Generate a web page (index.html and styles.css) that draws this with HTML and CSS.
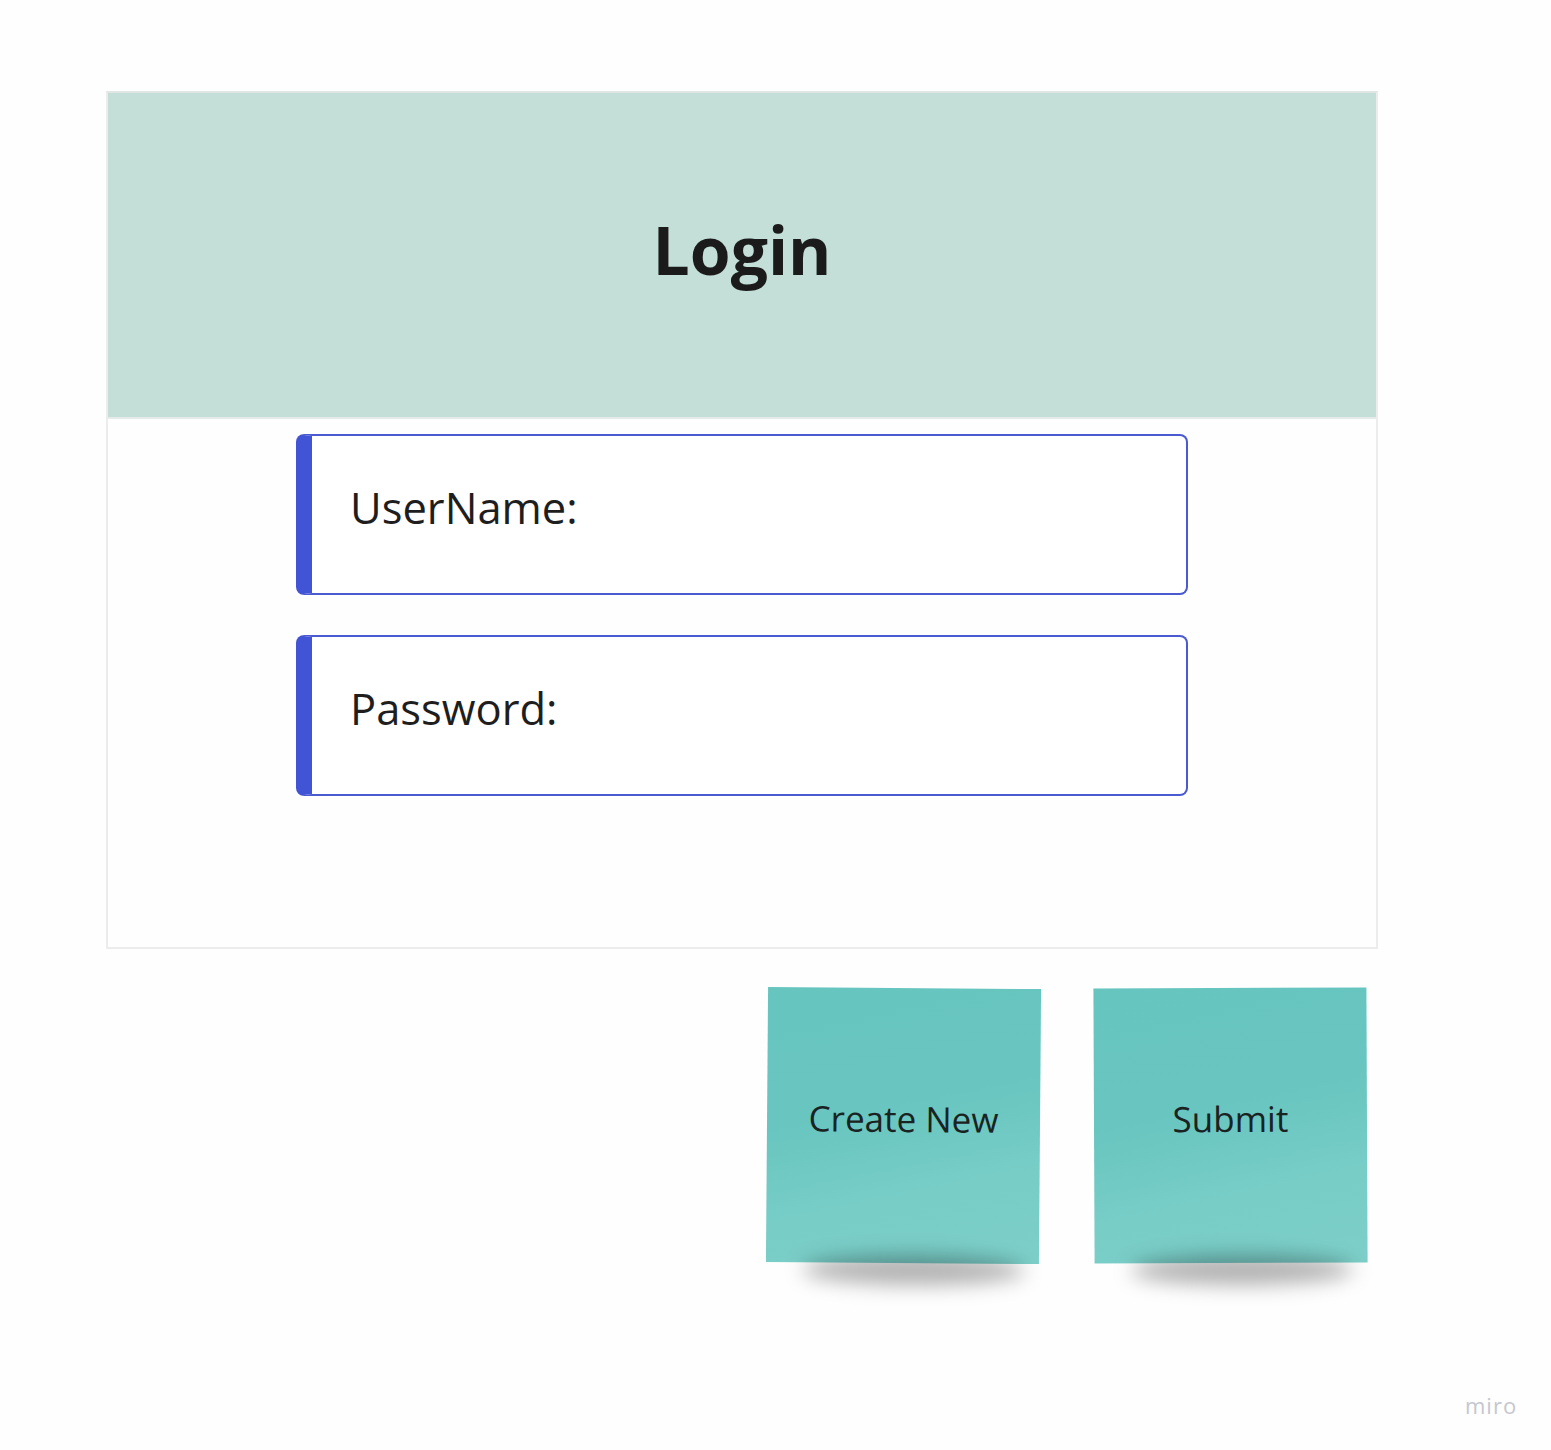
FILE: index.html
```html
<!DOCTYPE html>
<html lang="en">
<head>
<meta charset="utf-8">
<title>Login</title>
<link rel="stylesheet" href="styles.css">
</head>
<body>
<div class="canvas">
  <div class="frame">
    <div class="header"><h1 class="title">Login</h1></div>
    <div class="fields">
      <div class="field"><span class="label">UserName:</span></div>
      <div class="field"><span class="label">Password:</span></div>
    </div>
  </div>
  <div class="notes">
    <div class="note note-left"><span>Create New</span></div>
    <div class="note note-right"><span>Submit</span></div>
  </div>
</div>
<div class="brand">miro</div>
</body>
</html>
```

FILE: styles.css
```css
html, body {
  margin: 0;
  padding: 0;
  background: #fefefe;
}
body {
  width: 1551px;
  height: 1450px;
  position: relative;
  overflow: hidden;
  font-family: "Open Sans", "Noto Sans", sans-serif;
  color: #1c1c1c;
}
.canvas {
  padding: 91px 0 0 106px;
}
.frame {
  box-sizing: border-box;
  width: 1272px;
  height: 858px;
  border: 2px solid #ececec;
  border-top-color: #dfe6e3;
  background: #fefefe;
}
.header {
  box-sizing: border-box;
  height: 326px;
  background: #c3dfd7;
  border-bottom: 2px solid #e5ebe9;
  display: flex;
  align-items: center;
  justify-content: center;
  padding-bottom: 10px;
}
.title {
  margin: 0;
  font-size: 66px;
  font-weight: 700;
  line-height: 1.2;
  color: #1b1b1b;
}
.fields {
  display: flex;
  flex-direction: column;
  gap: 40px;
  padding: 15px 0 0 188px;
}
.field {
  box-sizing: border-box;
  width: 892px;
  height: 161px;
  border: 2px solid #4a5ad0;
  border-left: 16px solid #4254d6;
  border-radius: 8px;
  display: flex;
  align-items: center;
  padding: 0 0 12px 38px;
  background: #fff;
}
.label {
  font-size: 43.5px;
  line-height: 1.2;
  color: #1e1e1e;
}
.notes {
  display: flex;
  gap: 54px;
  padding: 39px 0 0 661px;
}
.note {
  position: relative;
  width: 273px;
  height: 275px;
  background: linear-gradient(168deg, #67c5bf 0%, #68c5bf 42%, #78cdc7 72%, #7dcfc9 100%);
  display: flex;
  align-items: center;
  justify-content: center;
  padding-bottom: 14px;
  box-sizing: border-box;
}
.note::after {
  content: "";
  position: absolute;
  left: 36px;
  right: 14px;
  bottom: -22px;
  height: 30px;
  border-radius: 50%;
  background: rgba(0, 0, 0, 0.3);
  filter: blur(10px);
  z-index: -1;
}
.note span {
  font-size: 35px;
  line-height: 1.2;
  color: #1a2322;
}
.note-left {
  transform: rotate(0.45deg);
}
.note-right {
  transform: rotate(-0.25deg);
}
.brand {
  position: absolute;
  left: 1465px;
  top: 1390px;
  font-size: 22px;
  letter-spacing: 1px;
  color: #c5c7d0;
}
```
